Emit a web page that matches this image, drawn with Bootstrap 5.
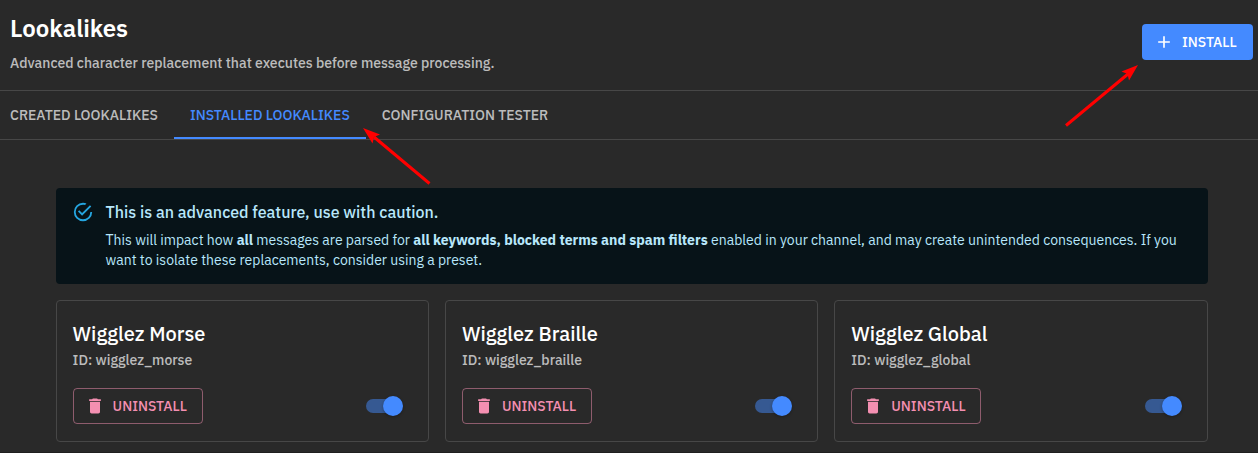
<!DOCTYPE html>
<html lang="en" data-bs-theme="dark">
<head>
<meta charset="utf-8">
<meta name="viewport" content="width=device-width, initial-scale=1">
<title>Lookalikes</title>
<link href="https://cdn.jsdelivr.net/npm/bootstrap@5.3.0/dist/css/bootstrap.min.css" rel="stylesheet">
<style>
  body { background: #292929; color: #fff; font-family: "IBM Plex Sans", Roboto, sans-serif; font-size: 14px; line-height: 20px; height: 453px; overflow: hidden; border-bottom: 1px solid #1f1f1f; }
  .page-head { height: 91px; border-bottom: 1px solid #474747; padding: 12px 5px 0 10px; }
  .page-title { font-size: 24px; line-height: 32px; font-weight: 600; }
  .muted { color: rgba(255,255,255,.7); font-weight: 500; }
  .subtitle { margin-top: 9px; }
  .action { border-radius: 4px; height: 36px; font-size: 14px; font-weight: 500; line-height: 20px; gap: 8px; }
  .btn-install { margin-top: 12px; background: #448aff; color: #fff; width: 111px; padding: 0 12px; }
  .tab-row { height: 49px; border-bottom: 1px solid #474747; }
  .tab-row .nav-link { height: 48px; padding: 2px 16px 0; color: rgba(255,255,255,.7); font-weight: 500; border-radius: 0; border-bottom: 2px solid transparent; white-space: nowrap; }
  .tab-row .nav-link:first-child { padding-left: 10px; }
  .tab-row .nav-link.active { color: #448aff; border-color: #448aff; }
  .page-body { padding: 48px 50.4px 0 55.6px; }
  .notice { background: #071318; color: #b8e7fb; border-radius: 4px; height: 96px; padding: 12px 16px; gap: 12px; }
  .notice-icon { margin-top: 1px; opacity: .9; }
  .notice-title { font-size: 16px; line-height: 24px; font-weight: 500; margin-bottom: 6px; }
  .tiles { display: grid; grid-template-columns: repeat(3, 1fr); gap: 16px; margin-top: 16px; }
  .tile { height: 142px; border: 1px solid #474747; border-radius: 4px; padding: 18px 25px 0 16px; }
  .tile-title { font-size: 20px; line-height: 30px; font-weight: 500; }
  .tile-id { margin-top: 1px; }
  .tile-foot { margin-top: 18px; }
  .btn-remove { color: #f48fb1; border: 1px solid rgba(244,143,177,.5); width: 130px; padding: 0 11px; }
  .toggle { width: 37px; height: 20px; position: relative; }
  .toggle::before { content: ""; position: absolute; left: 0; top: 3px; width: 34px; height: 14px; border-radius: 7px; background: #365992; }
  .toggle::after { content: ""; position: absolute; right: 0; top: 0; width: 20px; height: 20px; border-radius: 50%; background: #448aff; box-shadow: 0 1px 3px rgba(0,0,0,.3); }
  .arrows { position: absolute; left: 0; top: 0; pointer-events: none; }
</style>
</head>
<body>
<header class="page-head d-flex justify-content-between align-items-start">
  <div>
    <h1 class="page-title m-0">Lookalikes</h1>
    <p class="subtitle muted mb-0">Advanced character replacement that executes before message processing.</p>
  </div>
  <button class="btn btn-install action border-0 d-flex align-items-center">
    <svg width="20" height="20" viewBox="0 0 24 24" fill="currentColor"><path d="M19 13h-6v6h-2v-6H5v-2h6V5h2v6h6v2z"/></svg>
    INSTALL
  </button>
</header>
<nav class="tab-row nav flex-nowrap">
  <a class="nav-link d-flex align-items-center" href="#">CREATED LOOKALIKES</a>
  <a class="nav-link active d-flex align-items-center" href="#">INSTALLED LOOKALIKES</a>
  <a class="nav-link d-flex align-items-center" href="#">CONFIGURATION TESTER</a>
</nav>
<main class="page-body">
  <div class="notice d-flex" role="alert">
    <svg class="notice-icon flex-shrink-0" width="22" height="22" viewBox="0 0 24 24" fill="#29b6f6"><path d="M20 12a8 8 0 0 1-8 8 8 8 0 0 1-8-8 8 8 0 0 1 8-8c.76 0 1.5.11 2.2.31l1.57-1.57A9.822 9.822 0 0 0 12 2 10 10 0 0 0 2 12a10 10 0 0 0 10 10 10 10 0 0 0 10-10M7.910 10.080 6.500 11.500 11 16 21 6l-1.410-1.420L11 13.170z"/></svg>
    <div>
      <div class="notice-title">This is an advanced feature, use with caution.</div>
      <div class="text-nowrap">This will impact how <b>all</b> messages are parsed for <b>all keywords, blocked terms and spam filters</b> enabled in your channel, and may create unintended consequences. If you<br>want to isolate these replacements, consider using a preset.</div>
    </div>
  </div>
  <section class="tiles">
    <article class="tile">
      <h2 class="tile-title m-0">Wigglez Morse</h2>
      <div class="tile-id muted">ID: wigglez_morse</div>
      <div class="tile-foot d-flex justify-content-between align-items-center">
        <button class="btn btn-remove action d-flex align-items-center"><svg width="20" height="20" viewBox="0 0 24 24" fill="currentColor"><path d="M6 19c0 1.100.9 2 2 2h8c1.100 0 2-.9 2-2V7H6v12zM19 4h-3.500l-1-1h-5l-1 1H5v2h14V4z"/></svg>UNINSTALL</button>
        <div class="toggle"></div>
      </div>
    </article>
    <article class="tile">
      <h2 class="tile-title m-0">Wigglez Braille</h2>
      <div class="tile-id muted">ID: wigglez_braille</div>
      <div class="tile-foot d-flex justify-content-between align-items-center">
        <button class="btn btn-remove action d-flex align-items-center"><svg width="20" height="20" viewBox="0 0 24 24" fill="currentColor"><path d="M6 19c0 1.100.9 2 2 2h8c1.100 0 2-.9 2-2V7H6v12zM19 4h-3.500l-1-1h-5l-1 1H5v2h14V4z"/></svg>UNINSTALL</button>
        <div class="toggle"></div>
      </div>
    </article>
    <article class="tile">
      <h2 class="tile-title m-0">Wigglez Global</h2>
      <div class="tile-id muted">ID: wigglez_global</div>
      <div class="tile-foot d-flex justify-content-between align-items-center">
        <button class="btn btn-remove action d-flex align-items-center"><svg width="20" height="20" viewBox="0 0 24 24" fill="currentColor"><path d="M6 19c0 1.100.9 2 2 2h8c1.100 0 2-.9 2-2V7H6v12zM19 4h-3.500l-1-1h-5l-1 1H5v2h14V4z"/></svg>UNINSTALL</button>
        <div class="toggle"></div>
      </div>
    </article>
  </section>
</main>
<!-- Pointer arrows over the active tab and the install button -->
<svg class="arrows" width="1258" height="453" viewBox="0 0 1258 453" fill="#f00" stroke="#f00">
  <path d="M429.500 183.500 374 137M1066 125.500 1128 74" stroke-width="3" fill="none"/>
  <path stroke="none" d="M363 128l17 6.500-6 2.500-1.500 6.500zM1138 65l-16.500 6.500 6 2.500 1.500 6.500z"/>
</svg>
<script src="https://cdn.jsdelivr.net/npm/bootstrap@5.3.0/dist/js/bootstrap.bundle.min.js"></script>
</body>
</html>
